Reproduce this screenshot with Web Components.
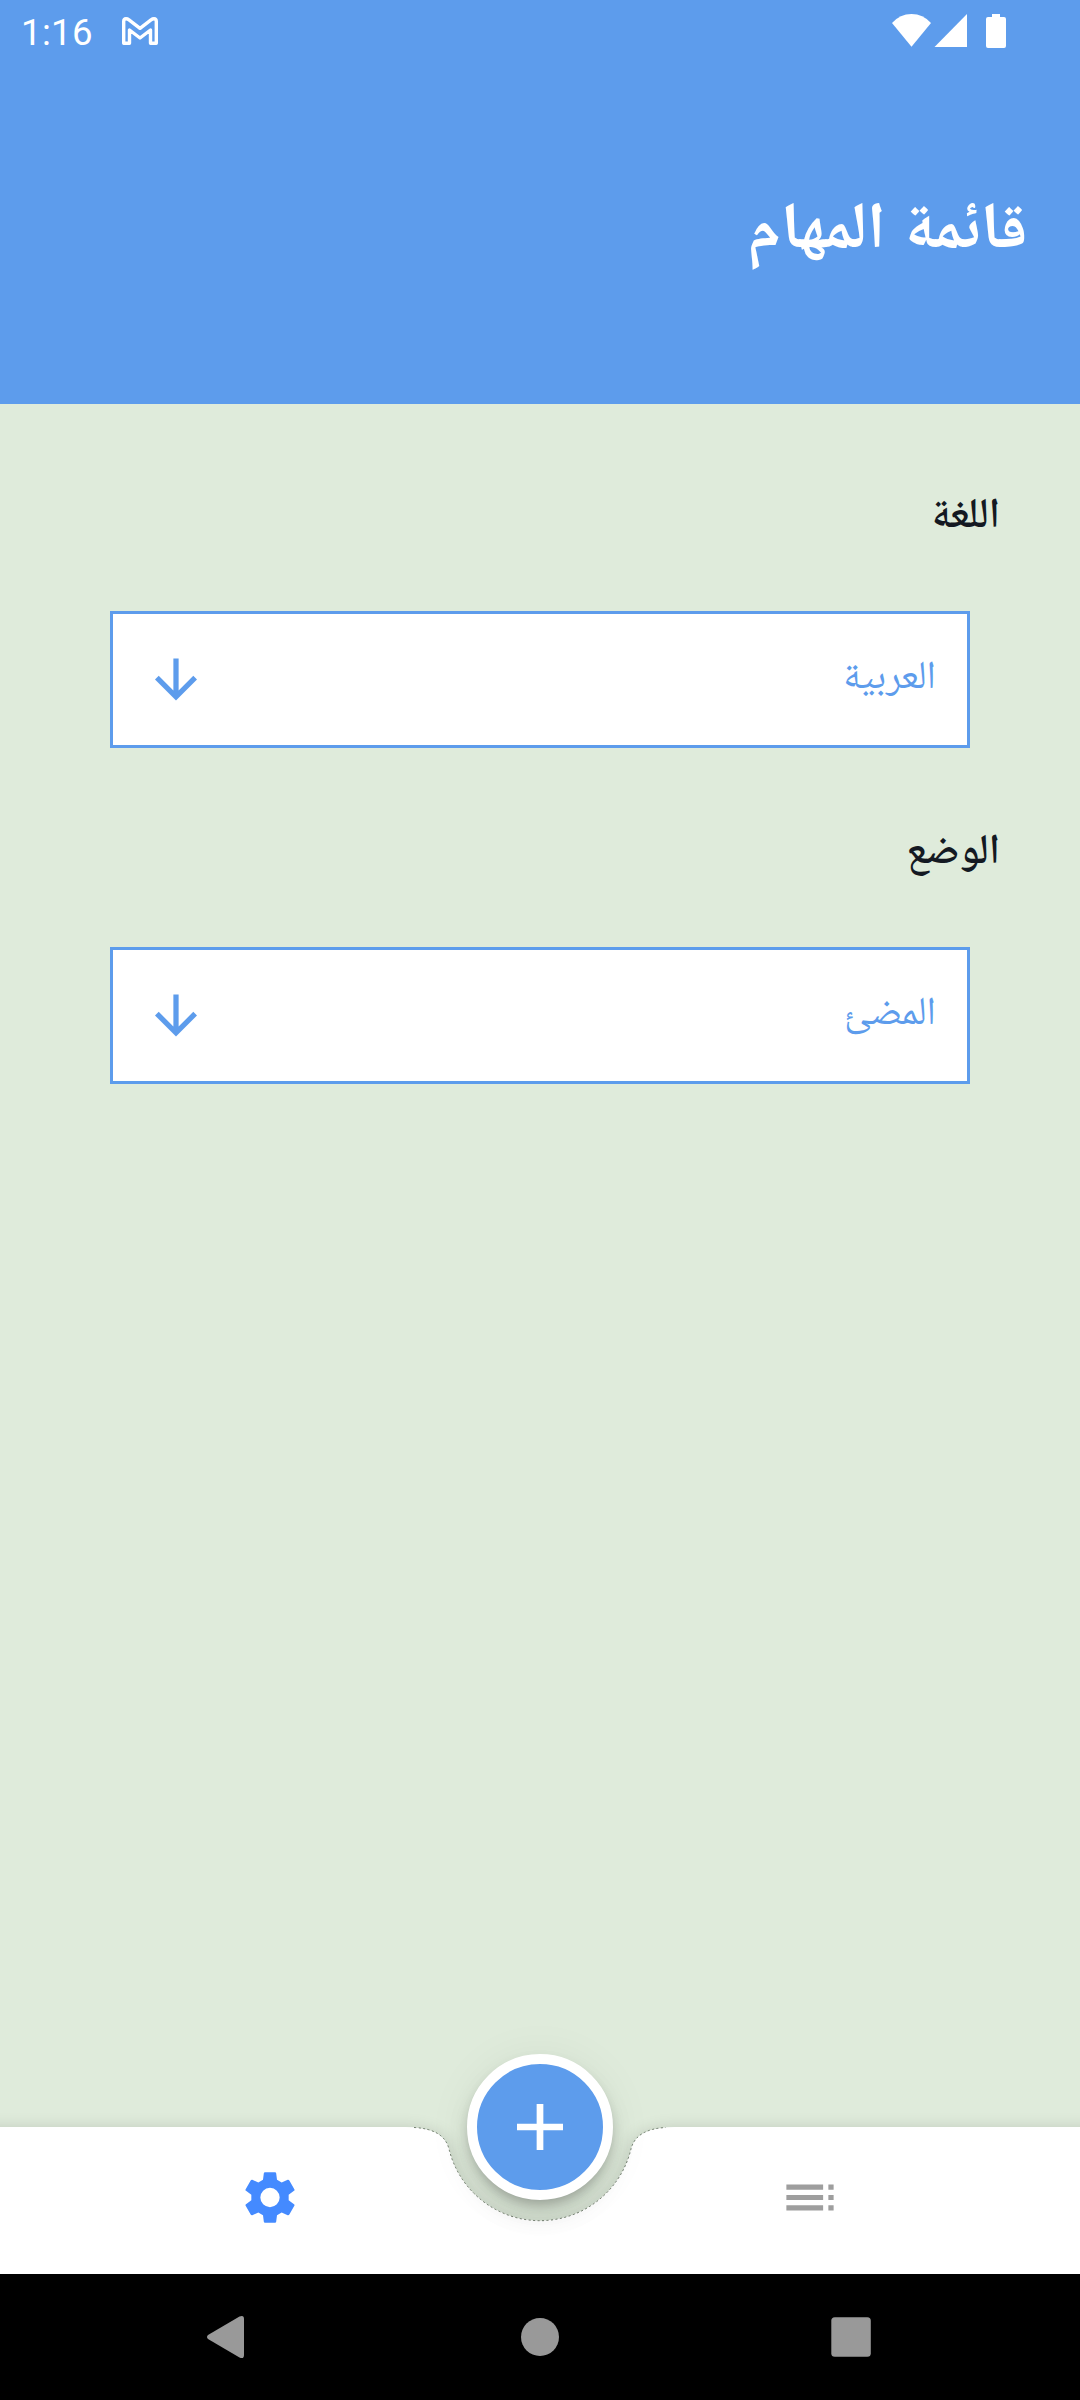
<!DOCTYPE html>
<html lang="ar">
<head>
<meta charset="utf-8">
<title>قائمة المهام</title>
<style>
html,body{margin:0;padding:0}
body{width:1080px;height:2400px;overflow:hidden;font-family:Roboto,"Noto Naskh Arabic","Noto Sans Arabic","DejaVu Sans",sans-serif}
</style>
</head>
<body>
<todo-app></todo-app>
<script>
const define = (name, html) => {
  const t = document.createElement('template');
  t.innerHTML = html;
  customElements.define(name, class extends HTMLElement {
    constructor() {
      super();
      this.attachShadow({ mode: 'open' }).append(t.content.cloneNode(true));
    }
  });
};

define('status-bar', `
<style>
:host{display:flex;height:64px;justify-content:space-between;direction:ltr;color:#fff}
.left{display:flex;padding-left:21px;gap:28px}
time{font:400 36.6px/66px Roboto,sans-serif;width:72px;letter-spacing:.35px;white-space:nowrap}
svg{display:block}
</style>
<div class="left"><time>1:16</time>
<svg width="38" height="64" viewBox="121 0 38 64" fill="none" stroke="#fff" stroke-width="3.400" stroke-linejoin="round"><path d="M126 18.700 Q127.500 18.700 129 19.800 L140 28.300 L151 19.800 Q152.500 18.700 154 18.700 Q156.300 18.700 156.300 21.500 V43.300 H150.500 V30 L140 38 L129.500 30 V43.300 H123.700 V21.500 Q123.700 18.700 126 18.700Z"/></svg></div>
<svg width="200" height="64" viewBox="880 0 200 64" fill="#fff"><path d="M892 23Q900 14 911.500 14T931 23L911.500 46.700Z"/><path d="M934.500 47L967 14V47Z"/><path d="M992 14h8v3h4q2 0 2 2v27q0 2-2 2h-16q-2 0-2-2v-27q0-2 2-2h4z"/></svg>`);

define('app-header', `
<style>
:host{display:flex;flex-direction:column;height:404px;background:#5d9cec;color:#fff}
.title{direction:rtl;padding:97px 52.500px 0 0;font-size:65.600px;line-height:130px;font-weight:700;word-spacing:3px}
</style>
<status-bar></status-bar><div class="title"><slot></slot></div>`);

define('select-box', `
<style>
:host{display:flex;box-sizing:border-box;width:860px;height:137px;border:3px solid #5d9cec;background:#fff;color:#5d9cec;direction:rtl;justify-content:space-between;align-items:center;padding:0 32px 0 32px}
svg{display:block}
.value{font-size:39.400px;line-height:60px;padding-bottom:9px;margin-right:-1px}
</style>
<div class="value"><slot></slot></div>
<svg width="62" height="63" viewBox=".19 0 23.620 24" fill="#5d9cec"><path d="M20 12l-1.410-1.410L13 16.170V4h-2v12.170l-5.580-5.590L4 12l8 8 8-8z"/></svg>`);

define('setting-field', `
<style>
:host{display:flex;flex-direction:column;height:336px;direction:rtl}
.label{padding-right:80px;height:130px;font-size:42px;line-height:64px;font-weight:650;color:#141922}
.box{padding-right:110px}
</style>
<div class="label"><slot name="label"></slot></div><div class="box"><select-box><slot></slot></select-box></div>`);

define('add-button', `
<style>
:host{display:flex;box-sizing:border-box;width:146px;height:146px;border:10px solid #fff;border-radius:50%;background:#5d9cec;justify-content:center;align-items:center;box-shadow:0 8px 13px -3px rgba(0,0,0,.24),0 16px 26px rgba(0,0,0,.08),0 3px 47px rgba(0,0,0,.06)}
svg{display:block}
</style>
<svg width="46" height="46" viewBox="0 0 46 46"><path d="M0 23H46M23 0V46" stroke="#fff" stroke-width="6.700"/></svg>`);

define('bottom-bar', `
<style>
:host{display:block;position:relative;height:147px}
.surface{position:absolute;left:0;top:-40px;display:block}
.tabs{position:relative;display:flex;direction:ltr;height:147px;justify-content:space-around}
.tabs svg{display:block;margin-top:39px}
add-button{position:absolute;left:467px;top:-73px}
</style>
<svg class="surface" width="1080" height="187" viewBox="0 -40 1080 187">
<defs><filter id="s" x="-5%" y="-30%" width="110%" height="160%"><feGaussianBlur stdDeviation="9"/></filter>
<clipPath id="c"><rect x="0" y="-40" width="1080" height="187"/></clipPath></defs>
<g clip-path="url(#c)"><path d="M-60 3H404.500Q443.900 3 449 25A93.600 93.600 0 0 0 631 25Q636.100 3 675.500 3H1140V220H-60Z" fill="#000" opacity=".18" filter="url(#s)"/></g>
<path d="M0 0H404.500Q443.900 0 449 22A93.600 93.600 0 0 0 631 22Q636.100 0 675.500 0H1080V147H0Z" fill="#fff"/>
<path d="M414 .5Q444 2 449 22A93.600 93.600 0 0 0 631 22Q636 2 666 .5" fill="none" stroke="#53604f" stroke-width=".9" stroke-dasharray="2 2.500" opacity=".9"/>
</svg>
<div class="tabs">
<svg width="62" height="63" viewBox="-93 -94.500 186 189"><path fill="#448aff" fill-rule="evenodd" d="M-15-76H15Q18-76 18.500-73L21-53L35-45L53-53Q56-54 58-51L73-25Q75-22 72-20L56-8V8L72 20Q75 22 73 25L58 51Q56 54 53 53L35 45L21 53L18.500 73Q18 76 15 76H-15Q-18 76-18.500 73L-21 53L-35 45L-53 53Q-56 54-58 51L-73 25Q-75 22-72 20L-56 8V-8L-72-20Q-75-22-73-25L-58-51Q-56-54-53-53L-35-45L-21-53L-18.500-73Q-18-76-15-76ZM0-29A29 29 0 1 0 0 29A29 29 0 1 0 0-29Z"/></svg>
<svg width="62" height="63" viewBox=".19 0 23.620 24" fill="#9e9e9e"><path d="M3 9h14V7H3v2zm0 4h14v-2H3v2zm0 4h14v-2H3v2zm16 0h2v-2h-2v2zm0-10v2h2V7h-2zm0 6h2v-2h-2v2z"/></svg>
</div>
<add-button></add-button>`);

define('system-nav', `
<style>
:host{display:block;height:126px;background:#000}
svg{display:block}
</style>
<svg width="1080" height="126" viewBox="0 0 1080 126" fill="#999"><path d="M208 61L239.500 42.500Q244 40.500 244 45V81Q244 85.500 239.500 83.500L208 65Q206 63 208 61Z"/><circle cx="540" cy="63" r="19"/><rect x="831.300" y="43.300" width="39.500" height="39.500" rx="3.500"/></svg>`);

define('todo-app', `
<style>
:host{display:flex;flex-direction:column;width:1080px;height:2400px;background:#dfebdb}
main{flex:1;padding-top:77px}
</style>
<app-header>قائمة المهام</app-header>
<main>
<setting-field><span slot="label">اللغة</span>العربية</setting-field>
<setting-field><span slot="label">الوضع</span>المضئ</setting-field>
</main>
<bottom-bar></bottom-bar>
<system-nav></system-nav>`);
</script>
</body>
</html>
